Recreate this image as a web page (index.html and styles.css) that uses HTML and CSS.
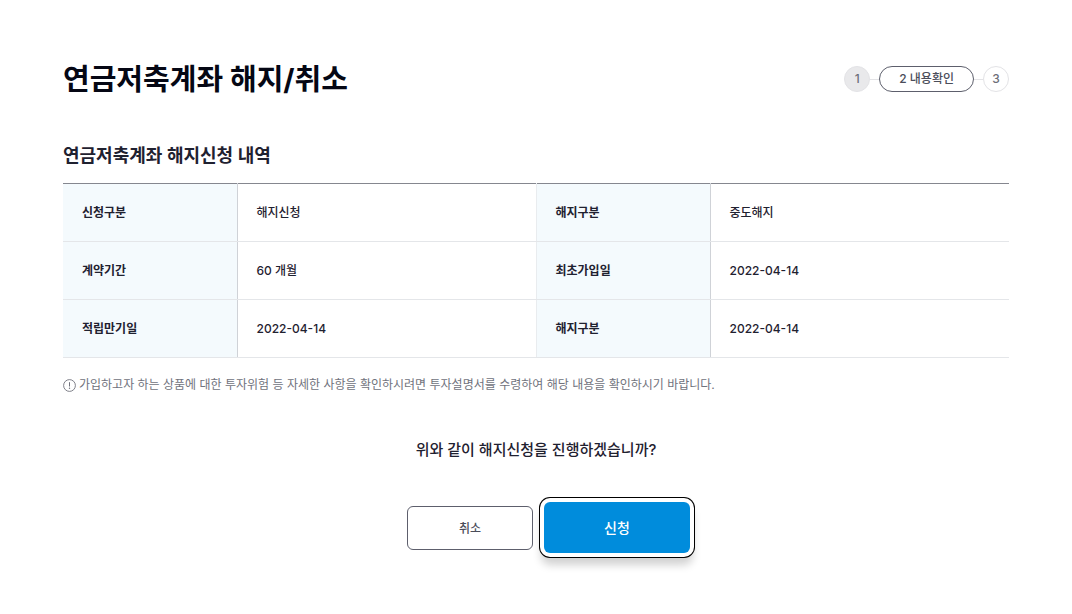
FILE: index.html
```html
<!DOCTYPE html>
<html lang="ko">
<head>
  <meta charset="utf-8">
  <meta name="viewport" content="width=device-width, initial-scale=1">
  <title>연금저축계좌 해지/취소</title>
  <link rel="stylesheet" href="styles.css">
</head>
<body>
  <main class="page">
    <header class="page_header">
      <h1>연금저축계좌 해지/취소</h1>
      <ol class="steps">
        <li class="step done">1</li>
        <li class="step current" aria-current="step">2 내용확인</li>
        <li class="step">3</li>
      </ol>
    </header>

    <section>
      <h2 id="detail_title">연금저축계좌 해지신청 내역</h2>
      <table class="detail" aria-labelledby="detail_title">
        <tbody>
          <tr>
            <th scope="row">신청구분</th>
            <td>해지신청</td>
            <th scope="row">해지구분</th>
            <td>중도해지</td>
          </tr>
          <tr>
            <th scope="row">계약기간</th>
            <td>60 개월</td>
            <th scope="row">최초가입일</th>
            <td>2022-04-14</td>
          </tr>
          <tr>
            <th scope="row">적립만기일</th>
            <td>2022-04-14</td>
            <th scope="row">해지구분</th>
            <td>2022-04-14</td>
          </tr>
        </tbody>
      </table>
      <p class="notice">
        <svg class="notice_icon" viewBox="0 0 13 13" aria-hidden="true">
          <circle cx="6.5" cy="6.5" r="5.9" fill="none" stroke="currentColor" stroke-width="0.9"/>
          <path d="M6.5 3.2v4.3" fill="none" stroke="currentColor" stroke-width="1"/>
          <circle cx="6.5" cy="9.3" r="0.7" fill="currentColor"/>
        </svg>
        <span>가입하고자 하는 상품에 대한 투자위험 등 자세한 사항을 확인하시려면 투자설명서를 수령하여 해당 내용을 확인하시기 바랍니다.</span>
      </p>
    </section>

    <form class="confirm">
      <p class="question">위와 같이 해지신청을 진행하겠습니까?</p>
      <div class="buttons">
        <button type="button" class="btn_cancel">취소</button>
        <button type="submit" class="btn_submit">신청</button>
      </div>
    </form>
  </main>
</body>
</html>
```
FILE: styles.css
```css
* {
  box-sizing: border-box;
}

body {
  margin: 0;
  background-color: #fff;
  color: #1f2130;
  font-family: Inter, "Noto Sans CJK KR", sans-serif;
  font-size: 12px;
  line-height: 18px;
}

h1, h2, p, ol {
  margin: 0;
}

.page {
  padding: 58px 63px 40px;
}

.page_header {
  display: flex;
  justify-content: space-between;
  align-items: center;
}

h1 {
  padding-top: 2px;
  color: #050714;
  font-size: 29px;
  font-weight: 700;
  line-height: 40px;
}

h2 {
  margin: 43px 0 14px;
  font-size: 18px;
  font-weight: 600;
  line-height: 26px;
}

/* Step indicator */
.steps {
  display: flex;
  align-items: center;
  padding: 0;
  list-style: none;
}

.step {
  display: flex;
  justify-content: center;
  align-items: center;
  width: 26px;
  height: 26px;
  border: 1px solid #e3e3e6;
  border-radius: 13px;
  color: #6c6e78;
  font-weight: 500;
}

.step.done {
  background-color: #e9e9eb;
}

.step.current {
  width: auto;
  padding: 0 19px;
  border-color: #5d5f6c;
  color: #4b4d5a;
}

.steps li + li {
  margin-left: 9px;
  position: relative;
}

.steps li + li::before {
  content: "";
  position: absolute;
  top: 12px;
  left: -10px;
  width: 9px;
  border-top: 1px solid #e3e3e6;
}

/* Detail table */
.detail {
  width: 100%;
  table-layout: fixed;
  border-collapse: collapse;
  border-top: 1px solid #85878f;
}

.detail th, .detail td {
  padding: 20px 19px 19px;
  border-bottom: 1px solid #e4e6e9;
  text-align: left;
  font-weight: 500;
}

.detail th {
  width: 174px;
  background-color: #f4fafd;
  border-right: 1px solid #cfd2d7;
  font-weight: 600;
}

.detail td + th {
  border-left: 1px solid #e9ecef;
}

.notice {
  display: flex;
  align-items: center;
  gap: 3px;
  margin-top: 18px;
  color: #70727c;
}

.notice_icon {
  flex: none;
  width: 13px;
  height: 13px;
}

.confirm {
  margin-top: 44px;
  text-align: center;
}

.question {
  font-size: 15px;
  font-weight: 500;
  line-height: 24px;
}

.buttons {
  display: flex;
  justify-content: center;
  align-items: center;
  gap: 11px;
  margin-top: 40px;
  padding-left: 25px;
}

button {
  padding: 0;
  font-family: inherit;
  cursor: pointer;
}

.btn_cancel {
  width: 126px;
  height: 44px;
  background-color: #fff;
  border: 1px solid #5d5f6c;
  border-radius: 6px;
  color: #4b4d5a;
  font-size: 12px;
  font-weight: 500;
}

/* White gap and black ring around the main action */
.btn_submit {
  width: 146px;
  height: 51px;
  padding-bottom: 2px;
  background-color: #008cdc;
  border: 0;
  border-radius: 6px;
  box-shadow: 0 0 0 4px #fff, 0 0 0 5px #000, 0 9px 9px 3px rgba(0, 0, 0, 0.18);
  color: #fff;
  font-size: 14px;
  font-weight: 500;
}
```
